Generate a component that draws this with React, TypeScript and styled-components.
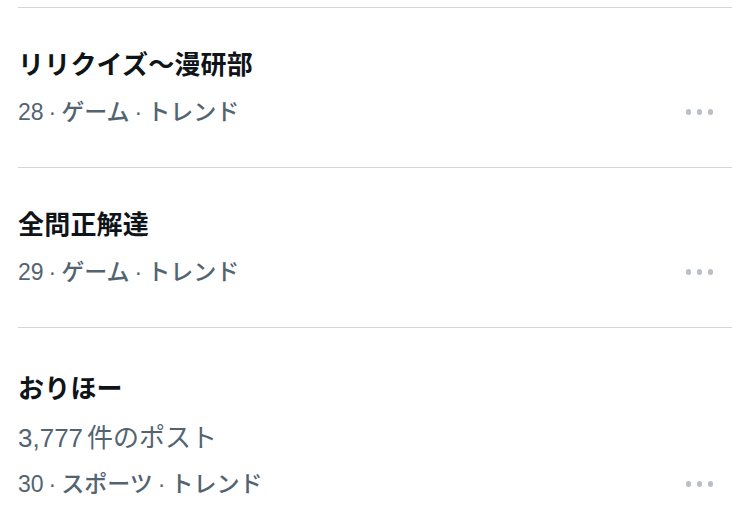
import React from "react";
import styled, { createGlobalStyle } from "styled-components";

const Global = createGlobalStyle`
  html, body { margin: 0; padding: 0; background: #ffffff; }
  body { font-family: "Liberation Sans", "Noto Sans CJK JP", sans-serif; }
`;

const List = styled.div`
  padding: 7px 18px 0 18px;
  display: flex;
  flex-direction: column;
`;

const Row = styled.div<{ $tall?: boolean }>`
  border-top: 1px solid #d2d6d9;
  padding: ${(p) => (p.$tall ? "43px 0 35px 0" : "39px 0 39px 0")};
  display: flex;
  align-items: flex-end;
  justify-content: space-between;
`;

const Body = styled.div`
  display: flex;
  flex-direction: column;
`;

const Title = styled.div`
  font-size: 26px;
  line-height: 36px;
  font-weight: 700;
  color: #0f1419;
  margin-bottom: 13px;
  letter-spacing: 0.2px;
`;

const Posts = styled.div`
  font-size: 26px;
  line-height: 32px;
  color: #536471;
  margin-bottom: 14px;
  margin-top: 2px;
`;

const Count = styled.span`
  margin-right: 4px;
`;

const Meta = styled.div`
  font-size: 23px;
  line-height: 32px;
  color: #536471;
  font-weight: 500;
`;

const Dot = styled.span`
  margin: 0 5px;
`;

const More = styled.div`
  display: flex;
  gap: 5.5px;
  align-items: center;
  height: 32px;
  margin-right: 19px;
`;

const MoreDot = styled.span`
  width: 5.5px;
  height: 5.5px;
  border-radius: 50%;
  background: #b8bfc6;
`;

type Trend = { rank: number; category: string; title: string; posts?: string };

const trends: Trend[] = [
  { rank: 28, category: "ゲーム", title: "リリクイズ〜漫研部" },
  { rank: 29, category: "ゲーム", title: "全問正解達" },
  { rank: 30, category: "スポーツ", title: "おりほー", posts: "3,777" },
];

export default function App() {
  return (
    <>
      <Global />
      <List>
        {trends.map((t) => (
          <Row key={t.rank} $tall={!!t.posts}>
            <Body>
              <Title>{t.title}</Title>
              {t.posts && (
                <Posts>
                  <Count>{t.posts}</Count>件のポスト
                </Posts>
              )}
              <Meta>
                {t.rank}
                <Dot>·</Dot>
                {t.category}
                <Dot>·</Dot>
                トレンド
              </Meta>
            </Body>
            <More>
              <MoreDot />
              <MoreDot />
              <MoreDot />
            </More>
          </Row>
        ))}
      </List>
    </>
  );
}
